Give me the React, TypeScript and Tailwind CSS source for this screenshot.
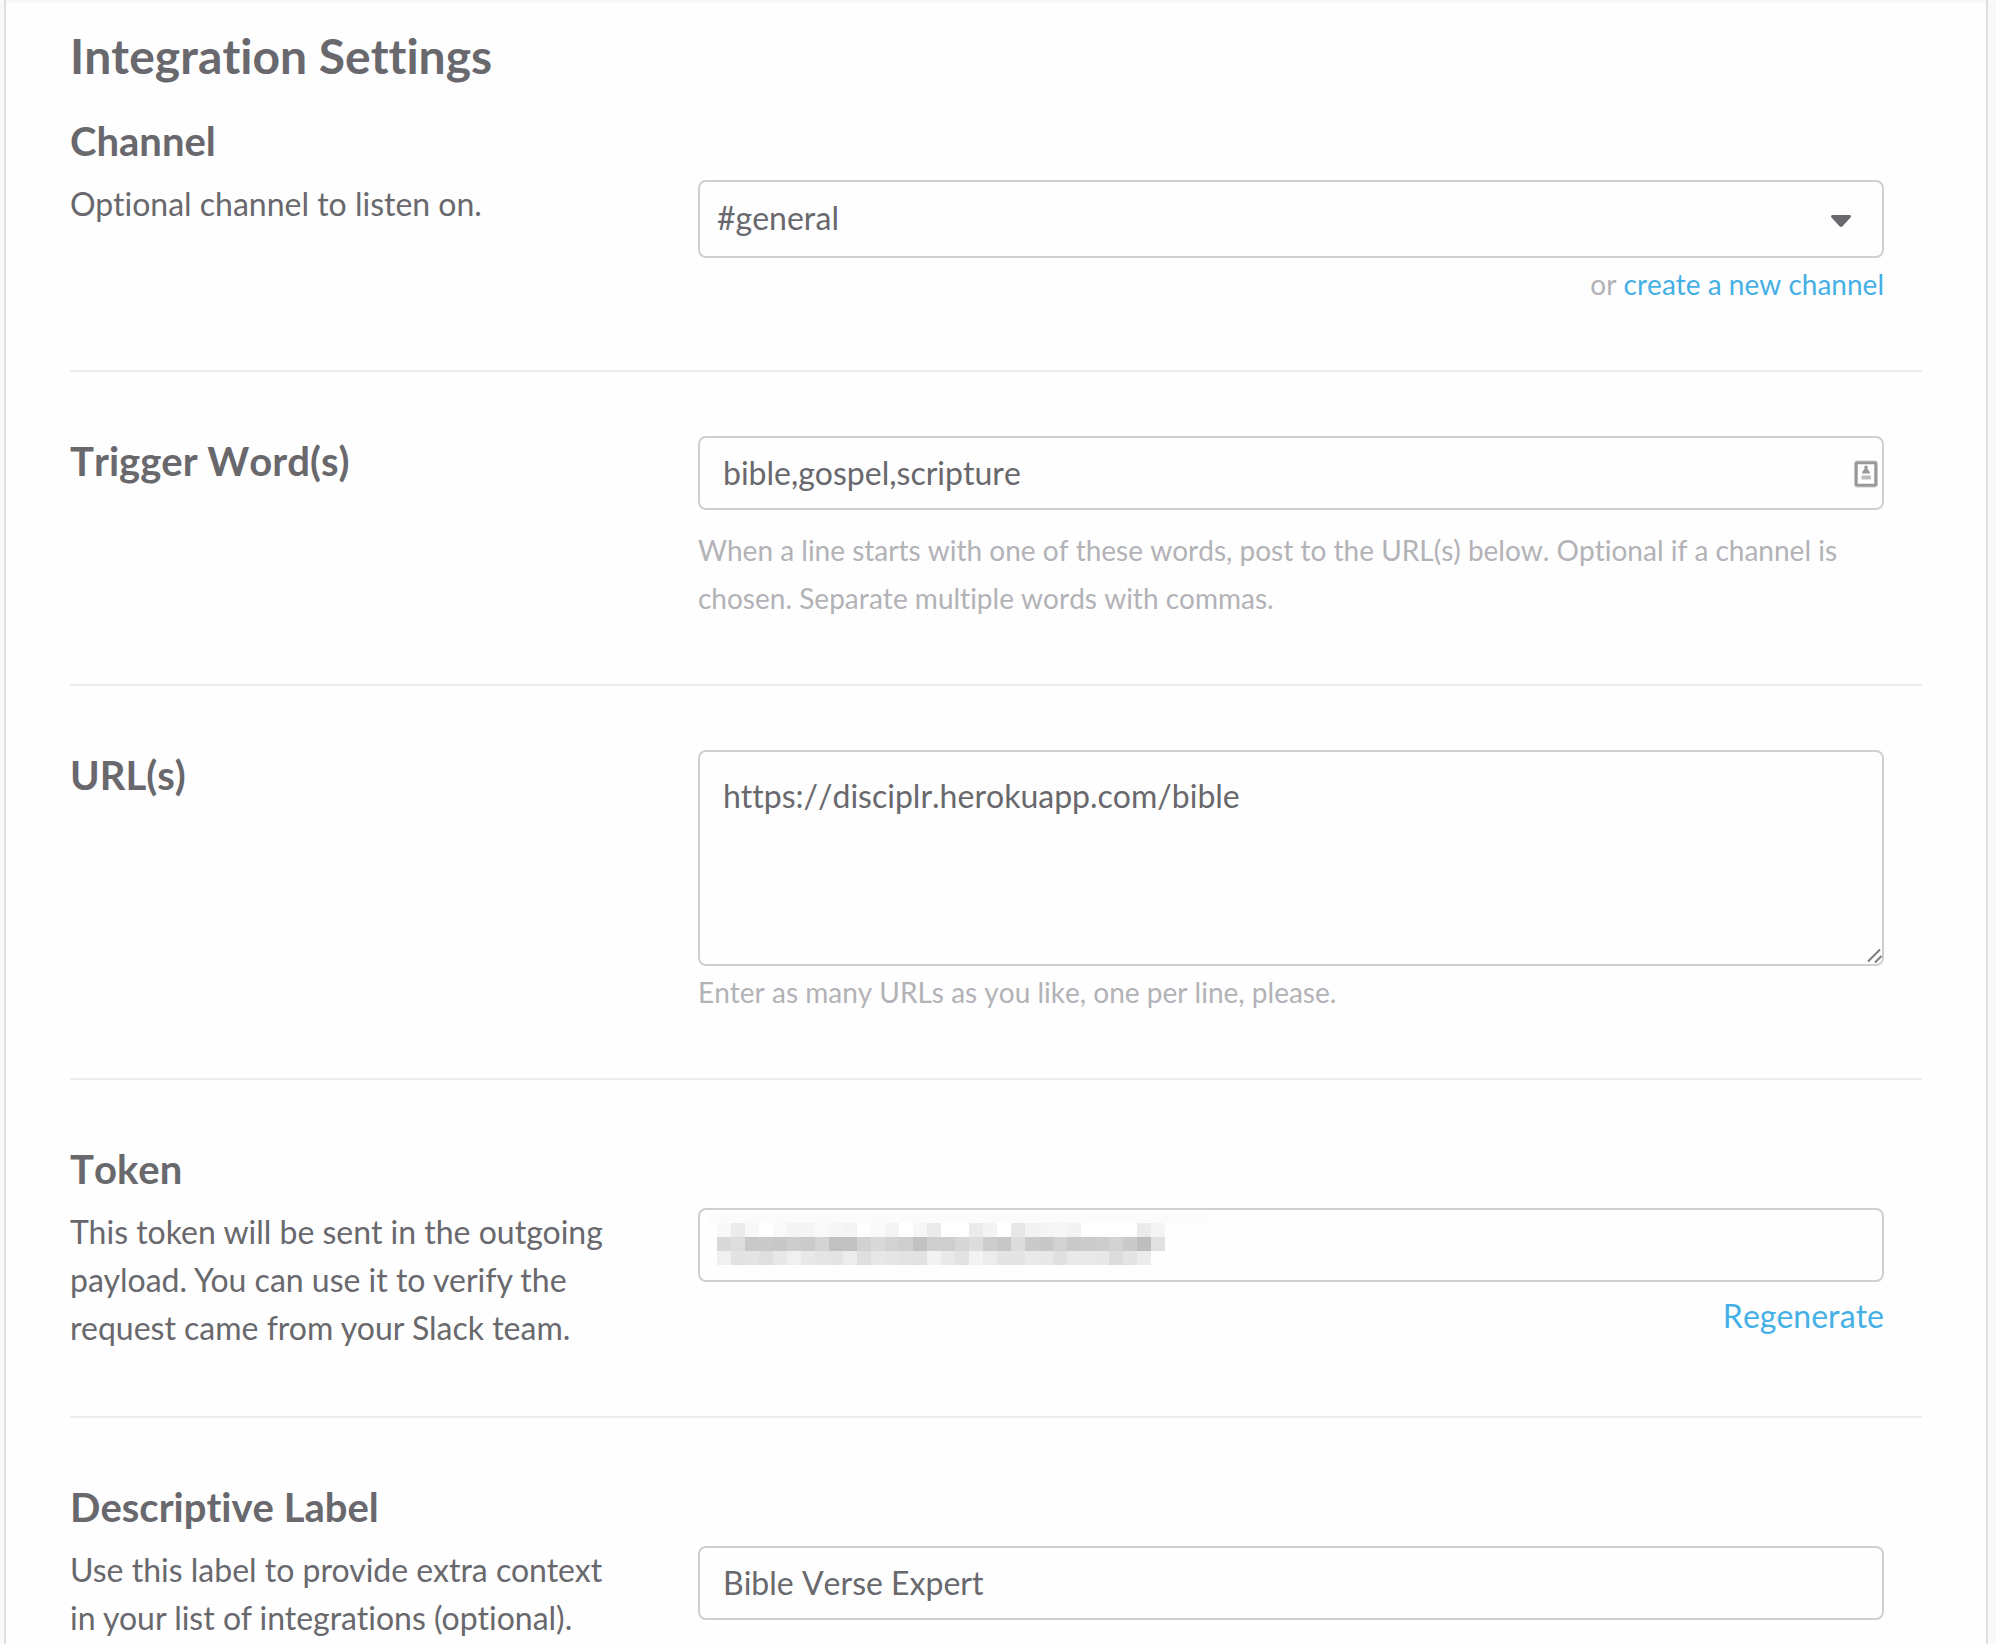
import type { ReactNode } from "react";

const BOX =
  "block w-full rounded-lg border-2 border-[#cfcfcf] bg-[#fefefe] text-[32px] leading-[48px] text-[#68686d] outline-none focus:border-[#45b0e6]";
const HINT = "text-[28px] leading-[48px] text-[#b2b2b7]";

const MASK_ROWS = [
  "f8 eb f8 ff f9 f4 f5 f9 f6 f4 ff f9 f4 ff f6 eb ff ff eb f3 ff e7 f2 f5 f6 f3 ff ff ff ff eb f4",
  "d8 dd c8 ca c8 cd ca d4 c1 c1 d1 d9 d2 ce c1 ce ce d6 dd cc c7 dc ca c8 d2 c9 cb cd d3 ca be e1",
  "f0 e2 e4 df e8 f0 e8 e5 e4 ec df e7 e5 e3 e2 f3 e9 e2 f3 ec e4 e4 e9 e8 e0 e9 e9 e8 dc e4 ec fe",
].map((row) => row.split(" "));

function TokenMask() {
  return (
    <svg
      aria-hidden="true"
      className="pointer-events-none absolute top-1.5 left-[11px]"
      width="498"
      height="52"
      viewBox="0 0 498 52"
      shapeRendering="crispEdges"
    >
      <rect width="498" height="9" fill="#fbfbfb" />
      {MASK_ROWS.map((row, y) =>
        row.map((tone, x) => (
          <rect
            key={`${x}-${y}`}
            x={8 + x * 14}
            y={9 + y * 14}
            width="14"
            height="14"
            fill={`#${tone}${tone}${tone}`}
          />
        )),
      )}
    </svg>
  );
}

function CardIcon() {
  return (
    <svg
      aria-hidden="true"
      className="pointer-events-none absolute top-6 right-1.5"
      width="24"
      height="28"
      viewBox="0 0 24 28"
    >
      <rect x="2" y="2.5" width="20" height="23" rx="1.5" fill="none" stroke="#c8c8c8" strokeWidth="4" />
      <rect x="2.2" y="2.7" width="19.6" height="22.6" rx="1" fill="none" stroke="#989898" strokeWidth="2.4" />
      <path d="M12 5.5a1.8 1.8 0 0 1 1.3 3c.2 1.6 2.7 2.3 2.7 5H8c0-2.7 2.5-3.4 2.7-5a1.8 1.8 0 0 1 1.3-3z" fill="#999" />
      <rect x="7.5" y="15.5" width="9.5" height="4" rx="1" fill="#bdbdbd" />
    </svg>
  );
}

function Row({
  id,
  title,
  description,
  children,
}: {
  id: string;
  title: string;
  description?: string;
  children: ReactNode;
}) {
  return (
    <div className="flex pr-[38px]">
      <div className="w-[628px] shrink-0 pr-20">
        <label htmlFor={id} className="block text-[40px] leading-[50px] font-bold">
          {title}
        </label>
        {description && (
          <p className="mt-3.5 text-[32px] leading-[48px] [font-kerning:normal]">{description}</p>
        )}
      </div>
      <div className="min-w-0 flex-1">{children}</div>
    </div>
  );
}

export default function App() {
  return (
    <div className="min-h-screen bg-[#f9f9f9] pr-2 pl-1 font-['Lato',sans-serif] text-[#68686d] [font-kerning:none] [font-variant-ligatures:none]">
      <main className="min-h-screen border-x-2 border-[#dfdfdf] bg-[#fefefe]">
        <div className="h-1 bg-linear-to-b from-[#f5f5f5] to-[#fefefe]" />
        <form className="px-16 pt-[22px]" onSubmit={(e) => e.preventDefault()}>
          <h1 className="mb-[30px] text-[48px] leading-[60px] font-bold">Integration Settings</h1>

          <section className="border-b-2 border-[#ececec] pb-[62px]">
            <Row id="channel" title="Channel" description="Optional channel to listen on.">
              <div className="relative mt-16">
                <select id="channel" className={`${BOX} h-[78px] appearance-none px-[17px] pb-0.5`}>
                  <option>#general</option>
                </select>
                <svg
                  aria-hidden="true"
                  className="pointer-events-none absolute top-[35px] right-[33px]"
                  width="20"
                  height="12"
                  viewBox="0 0 20 12"
                >
                  <path
                    d="M1.5 0h17c1.3 0 2 1.5 1 2.5l-8 8.7c-.8.9-2.2.9-3 0l-8-8.7C-.5 1.5.2 0 1.5 0z"
                    fill="#68686d"
                  />
                </svg>
              </div>
              <p className={`${HINT} mt-0.5 text-right`}>
                or <a href="#new" className="text-[#45b0e6]">create a new channel</a>
              </p>
            </Row>
          </section>

          <section className="border-b-2 border-[#ececec] pt-16 pb-[62px]">
            <Row id="trigger" title="Trigger Word(s)">
              <div className="relative">
                <input id="trigger" type="text" defaultValue="bible,gospel,scripture" className={`${BOX} h-[74px] px-[23px] pb-0.5`} />
                <CardIcon />
              </div>
              <p className={`${HINT} mt-4`}>
                When a line starts with one of these words, post to the URL(s) below. Optional if a
                channel is chosen. Separate multiple words with commas.
              </p>
            </Row>
          </section>

          <section className="border-b-2 border-[#ececec] pt-16 pb-[62px]">
            <Row id="urls" title="URL(s)">
              <div className="relative">
                <textarea
                  id="urls"
                  defaultValue="https://disciplr.herokuapp.com/bible"
                  className={`${BOX} h-[216px] resize-none px-[23px] py-5`}
                />
                <svg
                  aria-hidden="true"
                  className="pointer-events-none absolute right-0.5 bottom-0.5"
                  width="16"
                  height="16"
                  viewBox="0 0 16 16"
                  stroke="#7c7c7e"
                  strokeWidth="2"
                >
                  <path d="M2 13.5L14 1.5M9 14.5L15.5 8" />
                </svg>
              </div>
              <p className={`${HINT} mt-0.5`}>Enter as many URLs as you like, one per line, please.</p>
            </Row>
          </section>

          <section className="border-b-2 border-[#ececec] py-16">
            <Row
              id="token"
              title="Token"
              description="This token will be sent in the outgoing payload. You can use it to verify the request came from your Slack team."
            >
              <div className="relative mt-16">
                <input id="token" type="text" readOnly className={`${BOX} h-[74px] px-6`} />
                <TokenMask />
              </div>
              <div className="mt-2.5 text-right">
                <button type="button" className="text-[32px] leading-[48px] text-[#45b0e6]">
                  Regenerate
                </button>
              </div>
            </Row>
          </section>

          <section className="pt-16">
            <Row
              id="label"
              title="Descriptive Label"
              description="Use this label to provide extra context in your list of integrations (optional)."
            >
              <div className="mt-16">
                <input id="label" type="text" defaultValue="Bible Verse Expert" className={`${BOX} h-[74px] px-[23px] pb-0.5`} />
              </div>
            </Row>
          </section>
        </form>
      </main>
    </div>
  );
}
